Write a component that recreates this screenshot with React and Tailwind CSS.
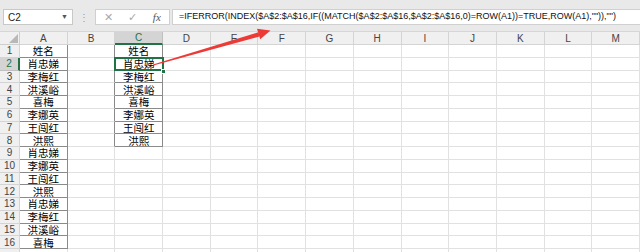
import React from "react";

const colA = ["姓名", "肖忠娣", "李梅红", "洪溪峪", "喜梅", "李娜英", "王闯红", "洪熙", "肖忠娣", "李娜英", "王闯红", "洪熙", "肖忠娣", "李梅红", "洪溪峪", "喜梅"];
const colC = ["姓名", "肖忠娣", "李梅红", "洪溪峪", "喜梅", "李娜英", "王闯红", "洪熙"];
const letters = ["A", "B", "C", "D", "E", "F", "G", "H", "I", "J", "K", "L", "M", "N"];

const formula = '=IFERROR(INDEX($A$2:$A$16,IF((MATCH($A$2:$A$16,$A$2:$A$16,0)=ROW(A1))=TRUE,ROW(A1),"")),"")';

// is cell (row r 1-based, col c 0-based) inside a bordered table
const inTable = (r, c) => (c === 0 && r >= 1 && r <= 16) || (c === 2 && r >= 1 && r <= 8);

const cellText = (r, c) => {
  if (c === 0) return colA[r - 1] || "";
  if (c === 2) return colC[r - 1] || "";
  return "";
};

const Cell = ({ r, c }) => {
  const right = inTable(r, c) || inTable(r, c + 1);
  const bottom = inTable(r, c) || inTable(r + 1, c);
  return (
    <div
      className={
        "border-r border-b flex items-center justify-center text-[10.5px] leading-[11px] text-black font-['Noto_Sans_CJK_SC',sans-serif] " +
        (right ? "border-r-[#8a8a8a] " : "border-r-[#e1e1e1] ") +
        (bottom ? "border-b-[#8a8a8a]" : "border-b-[#e1e1e1]")
      }
    >
      {cellText(r, c)}
    </div>
  );
};

export default function App() {
  const rows = Array.from({ length: 17 }, (_, i) => i + 1);

  return (
    <div className="relative w-[640px] h-[252px] overflow-hidden bg-white font-['Liberation_Sans',sans-serif]">
      {/* formula bar */}
      <div className="h-[32px] bg-[#e9e9e9] flex items-start pt-[9px] border-b border-[#d6d6d6]">
        <div className="ml-[3px] w-[70px] h-[16px] bg-white border border-[#c8c8c8] flex items-center justify-between pl-[4px] pr-[4px] text-[10px] text-[#222]">
          <span>C2</span>
          <span className="text-[7px] text-[#555]">▼</span>
        </div>
        <div className="w-[22px] h-[16px] flex items-center justify-center text-[10px] text-[#9a9a9a]">⋮</div>
        <div className="w-[75px] h-[16px] bg-white border border-[#d0d0d0] flex items-center text-[#a8a8a8]">
          <span className="w-[25px] text-center text-[11px]">✕</span>
          <span className="w-[25px] text-center text-[11px]">✓</span>
          <span className="w-[25px] text-center text-[11px] italic text-[#555] font-['Liberation_Serif',serif]">fx</span>
        </div>
        <div className="ml-[2px] flex-1 h-[16px] bg-white border-y border-l border-[#d0d0d0] flex items-center pl-[6px] text-[9px] text-[#111] whitespace-nowrap">
          {formula}
        </div>
      </div>

      {/* sheet */}
      <div className="grid grid-cols-[20px_repeat(13,47.7px)_1fr] grid-rows-[13px_repeat(17,12.75px)]">
        {/* corner */}
        <div className="bg-[#f0f0f0] border-r border-b border-[#cfcfcf] relative">
          <svg className="absolute right-[1px] bottom-[1px]" width="9" height="9" viewBox="0 0 9 9">
            <polygon points="9,0 9,9 0,9" fill="#b8b8b8" />
          </svg>
        </div>
        {letters.map((l, i) =>
          i === 2 ? (
            <div key={l} className="bg-[#d4d4d4] border-r border-r-[#c0c0c0] border-b-2 border-b-[#217346] flex items-center justify-center text-[10px] text-[#217346]">
              {l}
            </div>
          ) : (
            <div key={l} className="bg-[#f0f0f0] border-r border-b border-[#d4d4d4] flex items-center justify-center text-[10px] text-[#444]">
              {l === "N" ? "" : l}
            </div>
          )
        )}

        {rows.map((r) => (
          <React.Fragment key={r}>
            {r === 2 ? (
              <div className="bg-[#d4d4d4] border-r-2 border-r-[#217346] border-b border-b-[#c0c0c0] flex items-center justify-center text-[10px] text-[#217346]">
                {r}
              </div>
            ) : (
              <div className="bg-[#f0f0f0] border-r border-b border-[#d4d4d4] flex items-center justify-center text-[10px] text-[#444]">
                {r < 17 ? r : ""}
              </div>
            )}
            {letters.map((l, c) => (
              <Cell key={l} r={r} c={c} />
            ))}
          </React.Fragment>
        ))}
      </div>

      {/* active cell C2 */}
      <div className="absolute left-[114.4px] top-[56.6px] w-[49.7px] h-[14.75px] border-2 border-[#217346]" />
      <div className="absolute left-[160.8px] top-[68.5px] w-[5px] h-[5px] bg-[#217346] border border-white" />

      {/* red arrow */}
      <svg className="absolute left-0 top-0 pointer-events-none" width="640" height="252" viewBox="0 0 640 252">
        <polygon points="153,64.6 153.3,65.6 259.5,36.5 258.5,32.2" fill="#ec3a37" />
        <polygon points="270.5,30.5 257,28.8 260.2,39.3" fill="#ec3a37" />
      </svg>
    </div>
  );
}
